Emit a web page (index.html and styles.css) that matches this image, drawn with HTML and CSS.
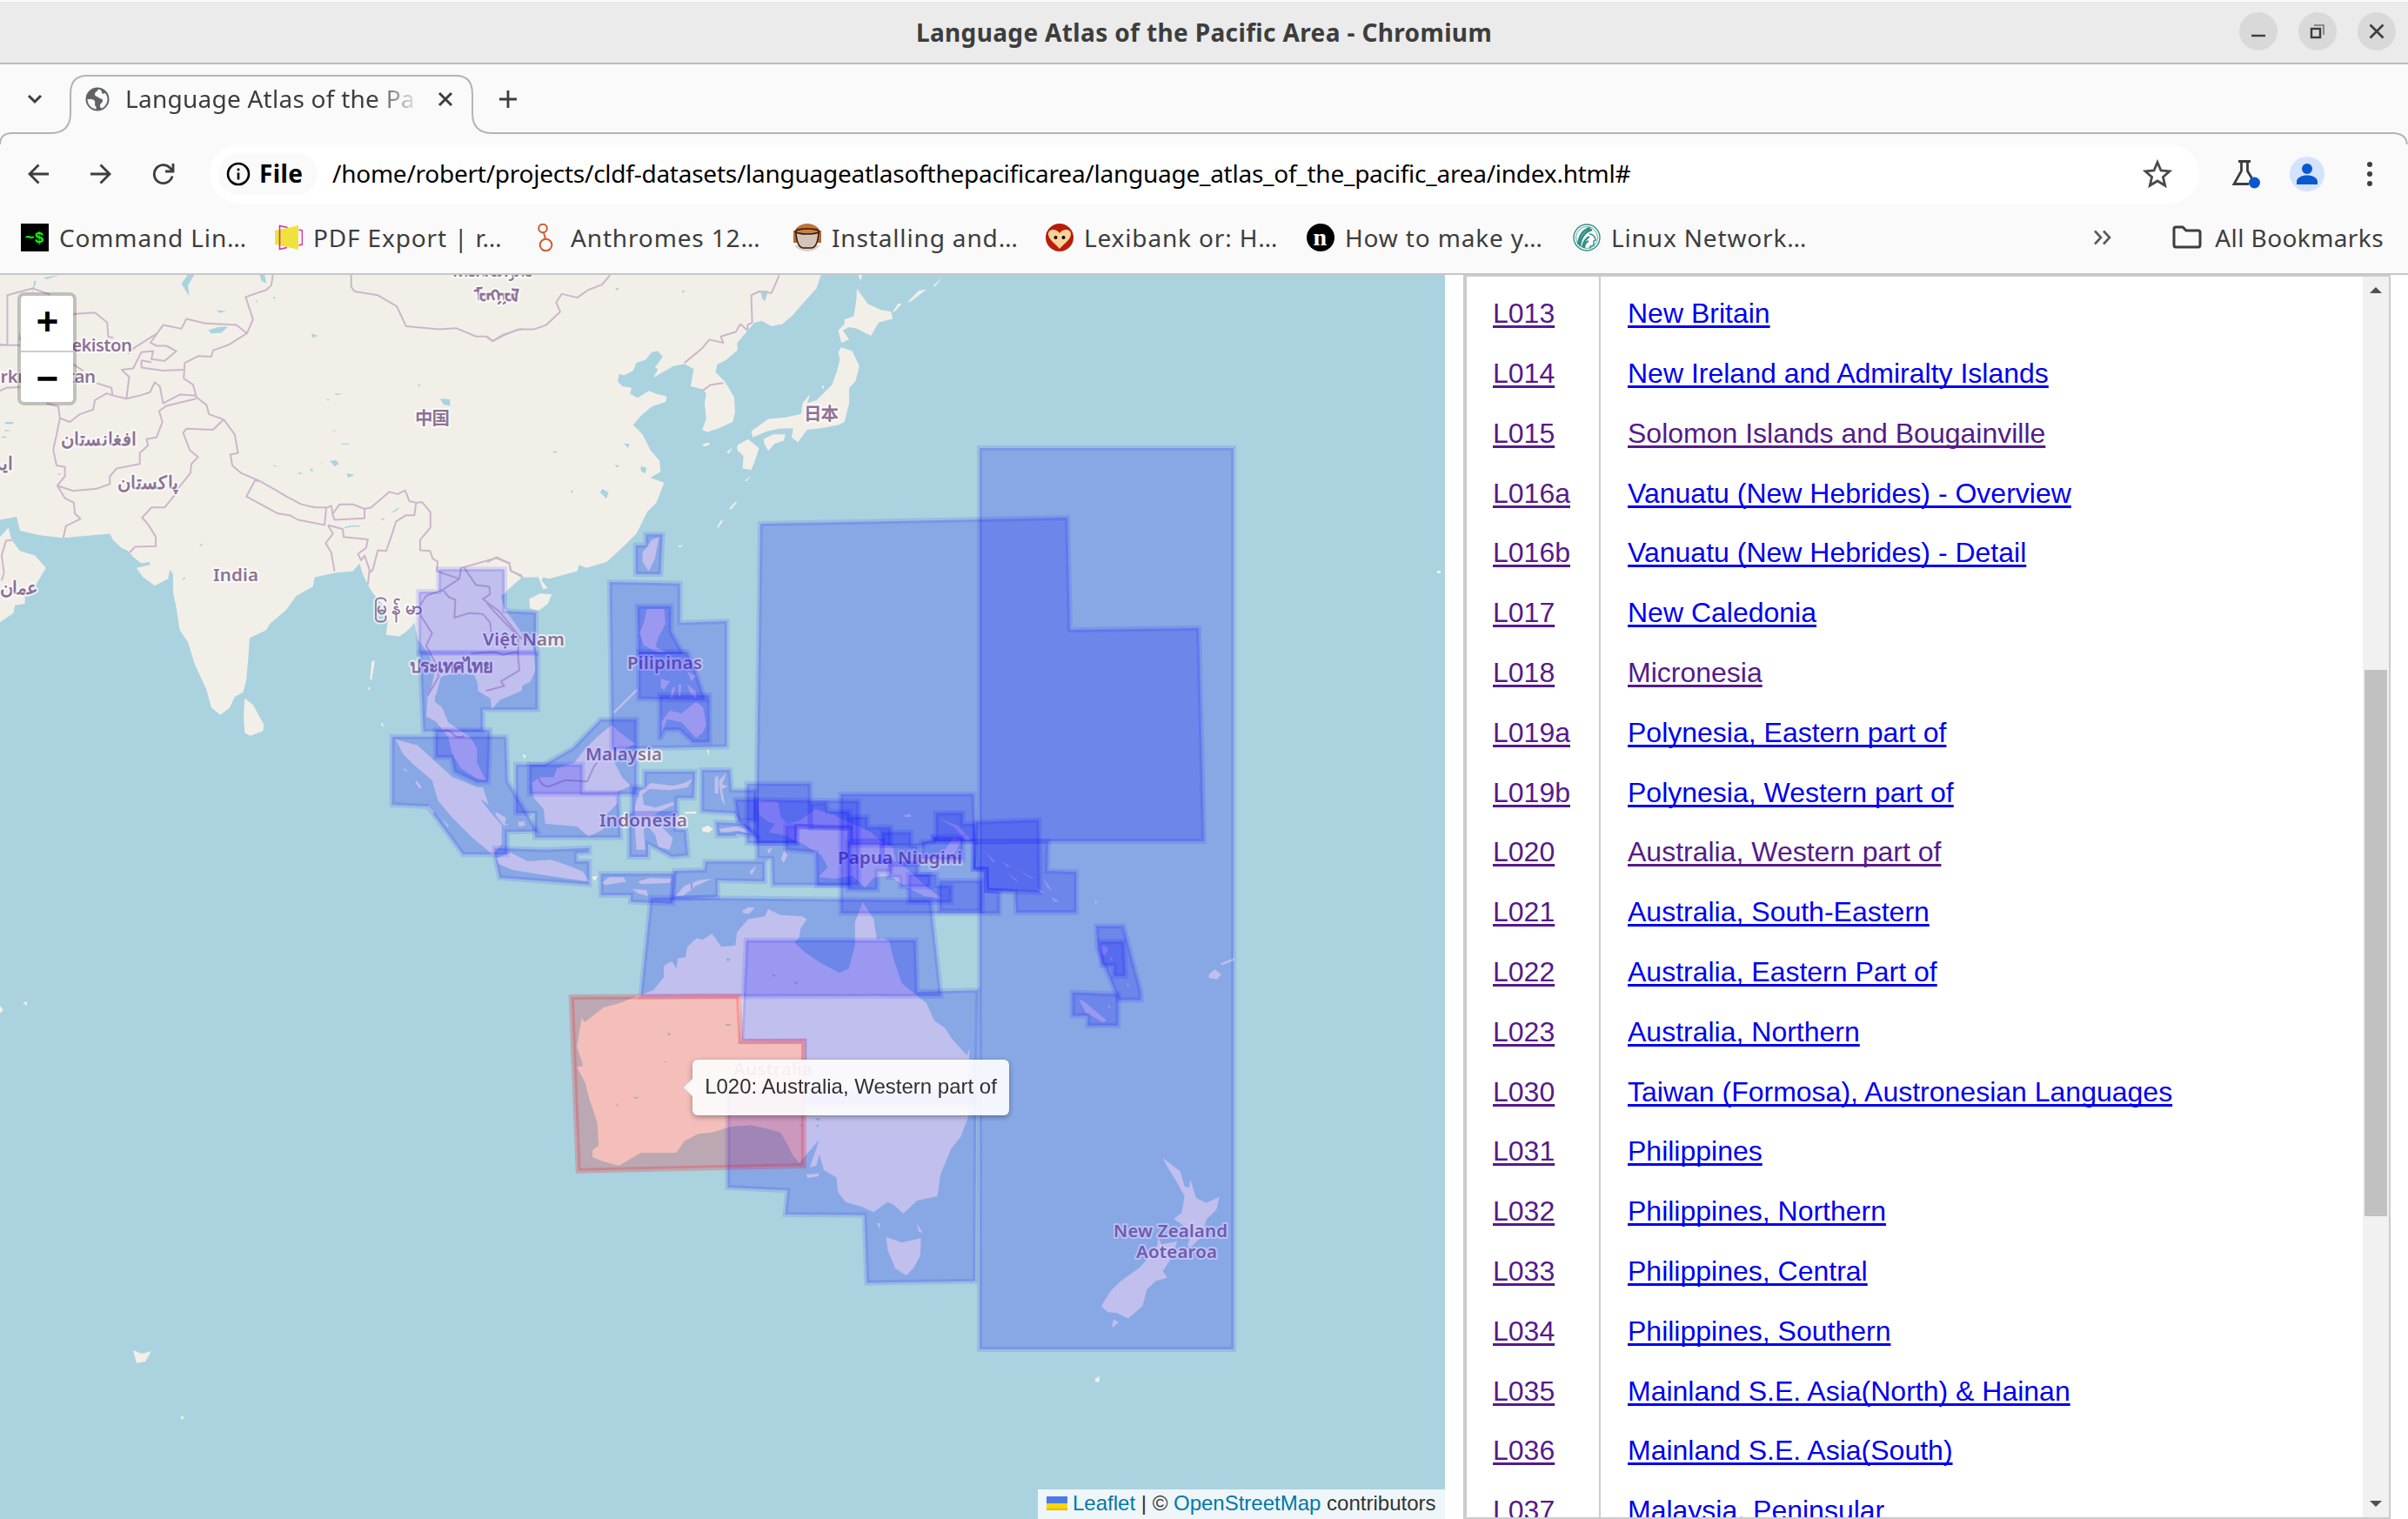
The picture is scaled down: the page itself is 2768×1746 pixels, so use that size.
FILE: index.html
```html
<!DOCTYPE html>
<html lang="en">
<head>
<meta charset="utf-8">
<title>Language Atlas of the Pacific Area</title>
<link rel="stylesheet" href="styles.css">
</head>
<body>
<header class="titlebar">
  <h1 class="window-title">Language Atlas of the Pacific Area - Chromium</h1>
  <div class="window-buttons">
    <span class="wbtn"><svg viewBox="0 0 44 44"><path d="M14 27h16" stroke="#3d3d3d" stroke-width="2.4"/></svg></span>
    <span class="wbtn"><svg viewBox="0 0 44 44" fill="none" stroke-width="2"><path d="M18 15h11v11" stroke="#8a8a8a"/><rect x="15" y="19" width="10" height="10" stroke="#3d3d3d" stroke-width="2.4"/></svg></span>
    <span class="wbtn"><svg viewBox="0 0 44 44"><path d="M14.500 14.500l15 15m0-15l-15 15" stroke="#3d3d3d" stroke-width="2.600"/></svg></span>
  </div>
</header>
<div class="tabstrip">
  <svg class="tab-outline" viewBox="0 0 2768 92" fill="none" stroke="#b4b4b4" stroke-width="2"><path d="M0 92Q0 79 14 79H58Q81 79 81 56V34Q81 13 100 13H524Q543 13 543 34V56Q543 79 566 79H2750Q2767 79 2767 94"/></svg>
  <svg class="tab-search" viewBox="0 0 18 12" fill="none" stroke="#3d3d3d" stroke-width="3"><path d="M2 2l7 7 7-7"/></svg>
  <svg class="tab-globe" viewBox="0 0 28 28"><circle cx="14" cy="14" r="13.500" fill="#5f6368"/><path d="M2.500 14c3 0 6-.5 8 1.500 2 3-1 5 2 7v3C7 25 2.500 20 2.500 14zM15 2.500c-1 3-4 3-4 6s4 2 5 4 4 0 4 3-3 3-3 6 2 3 2 3c4-2 6.500-6 6.500-10.500 0-3-1-5-2.500-7-2 1-4 1-4-1s-1-3-4-3.500z" fill="#fafafa"/></svg>
  <span class="tab-title">Language Atlas of the Pa</span>
  <svg class="tab-close" viewBox="0 0 18 18"><path d="M2 2l14 14m0-14L2 16" stroke="#3d3d3d" stroke-width="3"/></svg>
  <svg class="tab-new" viewBox="0 0 22 22"><path d="M11 1v20M1 11h20" stroke="#3d3d3d" stroke-width="2.800"/></svg>
</div>
<div class="toolbar">
  <svg class="nav-icon" viewBox="0 0 24 24" fill="none" stroke="#3d3d3d" stroke-width="2.800"><path d="M24 12H2M12.500 1.500L2 12l10.500 10.500"/></svg>
  <svg class="nav-icon fwd" viewBox="0 0 24 24" fill="none" stroke="#3d3d3d" stroke-width="2.800"><path d="M0 12h22M11.500 1.500L22 12 11.500 22.500"/></svg>
  <svg class="nav-icon reload" viewBox="0 0 26 26" fill="none" stroke="#3d3d3d" stroke-width="2.800"><path d="M23 15.500A10.500 10.500 0 1 1 20.500 6L24 9.500M24 1v9h-9"/></svg>
  <div class="omnibox">
    <div class="chip"><svg class="info" viewBox="0 0 28 28"><circle cx="14" cy="14" r="12" fill="none" stroke="#000" stroke-width="2.600"/><path d="M14 12.500v8M14 7.500v2.800" stroke="#000" stroke-width="2.600"/></svg><b class="file">File</b></div>
    <span class="url">/home/robert/projects/cldf-datasets/languageatlasofthepacificarea/language_atlas_of_the_pacific_area/index.html#</span>
    <svg class="star" viewBox="0 0 34 34"><path d="M17 3.500l4 9.500 10 .8-7.600 6.600 2.300 9.900L17 25l-8.700 5.300 2.300-9.900L3 13.800 13 13z" fill="none" stroke="#4a4a4a" stroke-width="2.800"/></svg>
  </div>
  <svg class="flask" viewBox="0 0 36 36"><path d="M10 3.500h14M13.500 4v10.500L5 29.500h17M20.500 4v10.500l6 10" fill="none" stroke="#3d3d3d" stroke-width="2.800"/><circle cx="28.500" cy="28" r="6.500" fill="#0b57d0"/></svg>
  <svg class="avatar" viewBox="0 0 40 40"><circle cx="20" cy="20" r="20" fill="#d3e3fd"/><circle cx="20" cy="14" r="6" fill="#0b57d0"/><path d="M8 32v-3c0-10 24-10 24 0v3z" fill="#0b57d0"/></svg>
  <svg class="kebab" viewBox="0 0 8 30" fill="#3d3d3d"><circle cx="4" cy="4" r="3"/><circle cx="4" cy="15" r="3"/><circle cx="4" cy="26" r="3"/></svg>
</div>
<nav class="bookmarks">
  <a class="bm bm-a"><svg viewBox="0 0 32 32"><path d="M0 0h32v32H0z"/><text x="5" y="22" class="term">~$</text></svg><span>Command Lin…</span></a>
  <a class="bm bm-b"><svg viewBox="0 0 32 32"><path d="M0 8l5-1v18l-5-1zM6 7l21-5v28L6 25z" fill="#f1e13c"/><path d="M14 27.500L5.500 29.500V2.500l9 2M27.500 7l4 1v16l-4 1" fill="none" stroke="#d1379a" stroke-width="1.600"/></svg><span>PDF Export | r…</span></a>
  <a class="bm bm-c"><svg viewBox="0 0 32 32" fill="none" stroke="#cf5b2e" stroke-width="2"><circle cx="12" cy="5.500" r="4.800"/><circle cx="15.500" cy="24.500" r="6.800"/><path d="M13 10.500l2 7"/></svg><span>Anthromes 12…</span></a>
  <a class="bm bm-d"><svg viewBox="0 0 32 32"><ellipse cx="16" cy="12" rx="15" ry="12" fill="#c0743a"/><path d="M0 8h32v14H0z" fill="#b06a3a"/><path d="M1 25l30 0q-6 7-15 7T1 25z" fill="#d9cfcb"/><path d="M3 10h26q-1 17-8 18H11Q4 27 3 10z" fill="#d3c3bb" stroke="#3a1b10" stroke-width="1.600"/><ellipse cx="16" cy="9" rx="13.500" ry="3" fill="#c98245" stroke="#3a1b10" stroke-width="1.600"/></svg><span>Installing and…</span></a>
  <a class="bm bm-e"><svg viewBox="0 0 32 32"><circle cx="16" cy="16" r="16" fill="#b81d0c"/><path d="M16 29C10 22 3 18 3 12c0-6 9-7 13-1 4-6 13-5 13 1 0 6-7 10-13 17z" fill="#fdd199"/><circle cx="11.500" cy="16" r="2"/><circle cx="20.500" cy="16" r="2"/></svg><span>Lexibank or: H…</span></a>
  <a class="bm bm-f"><svg viewBox="0 0 32 32"><circle cx="16" cy="16" r="16"/><text x="7.500" y="25" class="enn">n</text></svg><span>How to make y…</span></a>
  <a class="bm bm-g"><svg viewBox="0 0 32 32" fill="none" stroke="#2f8f85"><circle cx="16" cy="16" r="15" fill="#fff" stroke-width="1.400"/><circle cx="16" cy="16" r="12.500" stroke-width=".8"/><path d="M6 24Q8 8 20 5M8 26Q10 10 22 7M11 27q2-9 8-12M13 28q0-6 5-8" stroke-width="2.400"/><path d="M19 12q6 0 7 7l-2 1 0 5-4 1v3" stroke-width="1.400"/></svg><span>Linux Network…</span></a>
  <svg class="chevrons" viewBox="0 0 22 18" fill="none" stroke="#5a5a5a" stroke-width="2.600"><path d="M2 1.500L9 9l-7 7.500M12 1.500L19 9l-7 7.500"/></svg>
  <a class="bm bm-all"><svg viewBox="0 0 34 28" fill="none" stroke="#3d3d3d" stroke-width="3"><path d="M2 4q0-2 2-2h8l4 4h14q2 0 2 2v14q0 3-2 3H4q-2 0-2-3z"/></svg><span>All Bookmarks</span></a>
</nav>
<main class="page">
  <section class="map">
    <svg class="tiles" viewBox="0 316 1661 1430">
      <g class="land">
        <g transform="translate(0 310) scale(.38265 .35714)">
          <path d="M0 0H1568V990L1505 1050 1515 1090 1568 1170V1355L1490 1390 1478 1415 1475 1370 1440 1345 1425 1305 1390 1300 1365 1300 1325 1310 1310 1370 1290 1370 1305 1300 1290 1240 1255 1190 1245 1135 1235 1150 1220 1165 1200 1180 1160 1175 1165 1130 1150 1080 1120 1040 1105 1015 1090 980 1080 945 1060 970 1010 975 945 990 940 1020 890 1050 860 1095 810 1140 800 1160 750 1185 745 1260 740 1320 730 1360 705 1375 690 1410 662 1433 635 1410 620 1350 585 1270 565 1200 540 1160 530 1090 520 1040 520 980 510 965 505 995 465 1017 430 990 410 960 450 950 450 940 425 945 400 925 385 905 365 895 340 870 330 850 190 863 120 855 60 840 50 795 0 805z"/>
          <path d="M0 860L25 830 35 870 60 905 105 920 138 960 110 1010 75 1045 75 1075 45 1080 40 1105 0 1135zM735 1380L760 1400 793 1465 790 1485 752 1500 735 1490 732 1440zM1122 1255l4 5-10 60-4-5zM1104 1345l8 0-2 10zM1143 1460l8 0 0 14z"/>
        </g>
        <g transform="translate(560 310) scale(.35714)">
          <path d="M-30 0H1080L1060 60 1015 110 985 145 950 175 915 182 885 165 860 170 835 200 805 235 805 260 770 290 740 305 735 330 765 360 795 410 798 460 790 490 745 510 708 523 692 515 705 480 700 430 705 400 695 385 655 375 665 320 635 303 600 310 565 330 535 348 550 320 540 315 565 280 550 262 530 265 510 290 480 300 470 325 440 340 425 335 420 360 435 375 465 380 460 400 485 412 520 390 545 400 578 408 575 425 530 440 495 470 470 500 500 530 525 580 555 615 558 650 525 670 570 685 560 710 545 750 515 780 490 830 480 850 440 890 385 940 320 960 295 950 290 970 200 995 180 990 175 1000 195 1025 180 1028 165 990 110 990 75 1015 60 1040 40 1050 50 1090 95 1160 150 1220 155 1290 140 1325 75 1360 45 1380 15 1415 10 1380-30 1355z"/>
          <path d="M135 1060L170 1042 208 1045 195 1075 165 1098 138 1090zM553 860L540 930 520 970 500 940 500 910 530 870zM1190 60L1225 110 1270 130 1300 135 1305 158 1260 170 1235 213 1190 190 1165 185 1145 195 1165 225 1140 235 1130 195 1150 175 1150 160 1180 150 1188 100zM1140 250L1175 262 1198 310 1185 360 1165 380 1165 430 1150 490 1130 500 1075 510 1030 515 1000 555 980 540 985 510 940 512 900 520 855 540 850 520 905 480 960 475 1010 465 1015 430 1040 400 1030 430 1060 420 1110 370 1125 330 1135 290 1130 265zM890 545L920 530 960 530 955 550 925 560 905 583 892 560zM805 565L840 545 875 575 860 620 850 645 822 640 825 600 805 580zM1192 10h16l-6 28zM693 562l22-6 0 8-18 5zM740 828l12-20 8 0-16 22zM780 768l20-22 4 4-20 22zM1435 52l30-26-24 28zM1355 102l35-35 25-4-55 42zM1305 135l18-26 12 0-24 26zM1076 376l8-4-2 14zM770 588l20-16-12 20zM612 890l20-4-12 8zM830 678l18-14-14 18z"/>
        </g>
        <g transform="translate(420 600) scale(.33333)">
          <path d="M215 600L240 570 240 620 265 640 285 690 320 715 360 740 385 780 385 830 415 890 385 885 330 850 300 800 285 740 245 690 210 670zM105 750L180 770 240 825 300 880 350 900 400 920 400 960 430 1000 470 1045 470 1110 440 1150 420 1130 370 1090 300 1020 250 960 230 890 170 840 130 800zM575 900L600 880 650 880 660 850 720 830 760 780 800 740 850 700 870 720 930 765 880 790 860 830 885 880 915 910 870 930 870 970 830 1010 820 1060 770 1085 730 1050 670 1045 620 1040 615 990 580 950zM1130 885L1110 915 1050 925 980 920 955 940 960 975 1000 985 1060 965 1065 975 1010 1000 990 1020 1030 1060 1060 1090 1050 1130 1010 1120 1000 1080 975 1050 960 1060 965 1130 935 1130 930 1060 930 980 945 930 985 900 1060 910 1100 900z"/>
          <path d="M450 1160L500 1140 560 1170 640 1165 700 1185 750 1205 772 1240 700 1230 600 1215 510 1200 460 1180zM1070 1290L1100 1255 1150 1235 1195 1230 1140 1255 1095 1290zM920 1265L970 1270 975 1290 940 1280zM940 1240L980 1228 1055 1230 1050 1245 950 1248zM815 1245L840 1225 890 1225 900 1240 830 1252zM780 1225l20-5-8 18zM970 300L1030 300 1035 350 1010 400 1000 430 1040 450 1010 450 960 425 945 380 960 350zM1020 690L1050 650 1090 660 1140 620 1165 640 1175 700 1165 725 1140 745 1090 690 1040 680 1022 735zM855 655l80-80 4 6-80 80zM1020 540l30 10-20 30-12-10zM1060 570l8 0-8 40-10-6zM1080 560l10 0-4 40-6 0zM1110 515l30 15-16 20zM1110 560l30 25 0 25-20-20zM1205 880l12-4 0 60-12 0zM1220 890l25-25-15 40 20 5-20 12 10 55-12-20-8-50zM1218 1058l60-8 40 12 20 18-50-14-60 4zM1160 1055l22-8 16 12-14 12-20-4zM1100 1000l40-2 0 8-40 0zM175 890l20 25-8 4-14-20zM218 975l20 25-6 6-16-24zM125 845l20 12-4 4zM450 1000l35 20-4 20 16 4-20 2-28-36zM525 1035l22-4 4 16-20 4zM345 915l80 60-20-60zM542 800l12 6-6 12zM22 480l8 4-8 60-6 0zM262 1020l25 28-4 4zM1325 1205l24-20-16 32z"/>
        </g>
        <g transform="translate(780 800) scale(.35714 .33333)">
          <path d="M255 360L320 365 330 420 350 440 390 430 440 390 500 410 560 440 620 470 650 500 690 520 700 570 740 600 800 660 850 700 790 690 720 650 680 620 630 625 600 660 560 620 500 630 450 625 480 590 460 550 400 510 340 480 290 470 310 440 290 435 260 410zM790 560L850 540 885 490 910 500 890 540 820 575zM835 420L900 448 940 495 925 498 890 455zM725 412l20-6 4 10-20 2zM985 535l36 36-10 2zM1040 568l30 22-12 2zM1085 595l60 34-10 0zM1060 610l35 30-14-4zM1145 660l30 14-4 8zM1175 630l28 42-16-12zM1200 692l26 18-18 0zM340 530l10 20-12 26-8-14zM1338 708l10 2-6 6zM92 185l6 0 0 24zM285 530l18-8-12 22zM1360 860l20 10-6 26-12-10z"/>
        </g>
        <g transform="translate(640 1000) scale(.35714 .33333)">
          <path d="M80 510L90 525 150 475 200 460 260 435 310 415 345 370 345 330 370 315 385 340 390 305 415 300 420 265 450 235 470 240 500 220 530 265 575 260 580 215 615 170 670 160 680 135 720 155 790 160 805 170 785 200 780 235 765 250 800 285 850 320 910 355 940 340 960 260 960 180 985 110 1020 170 1030 240 1050 235 1070 245 1085 310 1110 390 1150 425 1190 460 1215 520 1250 545 1270 580 1320 640 1328 615 1325 720 1325 850 1300 920 1270 960 1235 1050 1225 1125 1160 1140 1115 1185 1085 1155 1065 1145 1020 1180 980 1160 930 1145 905 1110 900 1060 860 1035 845 980 835 1020 815 1025 845 930 780 1010 760 985 745 950 720 905 670 890 625 880 560 885 500 905 455 910 410 935 385 975 270 975 200 1020 150 1005 115 990 115 965 135 950 130 870 105 790 90 730 65 680 85 675 65 610zM1060 1265L1110 1285 1172 1270 1170 1330 1150 1370 1125 1398 1090 1375 1065 1310zM1030 1218l10 0 0 22zM1160 1222l18 30-14-6zM803 1050l40-4 0 10-36 6zM597 140l20-12 20 2-16 20-20 0z"/>
        </g>
        <g transform="translate(1080 1000) scale(.33333 .38265)">
          <path d="M770 866L830 905 845 950 860 955 865 930 885 985 920 1000 965 982 955 1020 920 1050 905 1100 870 1130 855 1130 870 1085 808 1048 835 1030 845 980 820 940 785 890zM755 1105L765 1125 820 1115 800 1165 770 1205 785 1225 745 1235 715 1260 700 1310 650 1347 610 1330 580 1328 558 1310 590 1265 625 1235 690 1195 720 1165 750 1130zM600 1350l18 8-24 18zM930 312l20-14 22 16-16 14-28-4zM970 280l46-16 0 8-44 14zM480 388l20 8 76 56-12 6-60-30zM560 225l20 8 0 14-16-8zM584 255l16 16-10 0zM580 410l8-4 2 12zM535 1530l16-10 0 18-12 0zM645 340l8 4-4 8z"/>
        </g>
        <path d="M153 1552l10 4 11-3-7 12-10 2zM208 1628h3v3h-3zM1652 656h4v3h-4zM0 1156l4 5-4 4zM26 1153l5-2v5z"/>
      </g>
      <g transform="translate(0 310) scale(.38265 .35714)" class="lakes">
        <path d="M545 45L565 15H585L565 50 568 85zM780 15h15l5 30-15-10zM625 195l30-10 30-2-20 20-30 2zM1322 415l30 2 0 22-20-6zM650 130l30 4-20 5zM990 615l20-2 8 12-12 8zM1040 655l25 5-18 10zM935 205l20 8-15 6zM1005 398l25 2-20 4zM95 80l8-45 6 4zM130 25l50-8-40 14zM15 490h25v6H15zM15 515l20 2-20 4zM5 537h14v4H5zM895 652l18 4-14 2zM820 628l14 6-10 0zM930 640l8 12 2-10zM955 618l20 6-10-2zM998 515l12 4-6 2zM1025 560h24v3h-24zM768 98l8 4-6 4zM820 86l10 4-8 4zM58 200l6 30-8-5zM1255 368l10 4-8 4zM980 418l10-2-4 6zM170 655l14 2-6 4z"/>
        <path d="M1145 805l10-4M1180 780l18-12M1035 830q30-8 45-4M550 998l6-8M600 890l8-8" fill="none" stroke="#aad3df" stroke-width="4"/>
      </g>
      <g transform="translate(560 310) scale(.35714)" class="lakes"><path d="M880 68l24 0-10 34-10-10zM370 705l20 12-6 20-20-20zM495 632l18 6-4 18-14-8zM440 560l18 0-4 14zM410 628l16 2-8 6zM412 58l14 2-8 8zM625 65l12 4-6 6zM208 583l20 2-10 6zM268 712l8-2-2 10z"/></g>
      <g transform="translate(640 1000) scale(.35714 .33333)" class="lakes"><path d="M540 530l25 2-15 7zM355 562l14 2-8 8zM245 782l22 2-12 6zM830 856l18 2-6 8zM833 880h12l-6 8zM762 385l14 4-6 8zM693 360l14 4-10 4zM545 305l14 0-8 12zM776 880h14v6zM340 661h12v4zM190 805l8 4-4 8z"/></g>
      <g class="borders">
        <g transform="translate(0 310) scale(.38265 .35714)">
          <path d="M820 15L815 50 800 65 738 88 760 160 742 205 690 240 640 260 635 280 595 278 555 300 552 350 580 370 590 410 620 435 628 465 672 482 705 530 715 590 692 595 698 630 725 655 780 680 830 710 860 730 905 755 945 765 985 765 995 760 1000 790 1005 805 1095 800 1095 770 1060 755 1020 755 1000 785M742 205L710 178 615 172 560 158 545 190 490 178 472 205 405 250 385 270M472 205L452 235 470 245 500 245 530 262 495 293 455 288 460 262 425 265 400 318 365 322 388 345 380 415 340 405 320 398 285 420 280 450 240 465 210 490 180 478 175 440 140 430M425 292L425 315 490 325 550 322M425 292L455 298M380 415L420 405 450 395 465 362 480 375 490 430 540 402 590 405M590 415L500 438 478 455 488 490 470 540 440 545 445 565 420 590 420 625 350 640 330 665 330 690 290 705 220 712 172 695 195 665 195 635 170 630 160 580 170 530 180 478M672 482L640 515 560 512 550 525 570 580 595 603 575 625 572 655 530 710 525 725 495 765 455 765 427 798 445 820 468 860 468 890 405 892 390 910M172 695L195 735 222 750 225 785 242 802 198 825 190 863M780 680L765 680 740 730 835 785 870 790 895 805 975 822 980 765M985 822L1000 850 978 880 995 910 1005 970M985 822L1030 835 1032 860 1105 868 1100 895 1075 915 1085 935 1095 920 1110 965 1105 1015M1095 770L1115 765 1170 715 1195 722 1217 710 1230 745 1250 750 1245 790 1220 790 1190 810 1175 860 1160 905 1135 903 1120 965 1112 975M1250 750L1268 748 1293 780 1293 830 1262 870 1262 903 1292 905 1300 930 1315 940 1312 970 1380 995 1385 960 1435 945 1490 928 1530 945 1535 970 1568 985M1395 960L1430 1015 1470 1020 1472 1045 1450 1060 1500 1100 1568 1190M1380 995L1330 1030 1280 1050 1262 1080 1265 1115 1298 1170 1280 1210 1310 1270 1318 1310 1285 1370M1330 1030L1350 1055 1368 1062 1365 1120 1410 1105 1450 1108 1472 1135 1478 1190M1415 1235L1490 1230 1510 1240 1555 1230 1560 1290 1505 1325 1515 1340 1460 1355"/>
          <path d="M1055 15L1055 55 1065 70 1135 82 1192 118 1220 182 1320 192 1370 188 1430 215 1460 215 1480 230 1510 210 1568 190M0 240L22 243 22 82 98 60 150 80M0 243H60M220 143L285 138 322 170 325 215 340 220M220 305L250 325M290 365L335 380 338 405M0 390L20 380 60 378M35 870L18 872 5 920 12 975 5 1000M1330 1485Q1350 1475 1365 1500 1380 1510 1395 1500"/>
        </g>
        <g transform="translate(560 310) scale(.35714)"><path d="M395 18L370 48 325 65 290 90 240 78 222 105 235 135 190 178 150 192 100 192 55 210 18 230 0 215M940 18L915 75 875 70 850 82 853 170 838 178 838 195 815 175 800 200 752 215 760 235 715 225 690 255 635 300M695 388L720 370 760 365M0 942L30 925 72 945 75 968 115 990M0 1075Q40 1120 100 1180V1240"/></g>
        <g transform="translate(420 600) scale(.33333)"><path d="M597 880Q605 910 630 913L690 890 765 895 790 840 800 830M1125 1245v20"/></g>
      </g>
      <g class="labels">
        <text x="42" y="404" textLength="110">Oʻzbekiston</text>
        <text x="-22" y="440" textLength="132">Türkmenistan</text>
        <text x="70" y="512" textLength="87">افغانستان</text>
        <text x="135" y="562" textLength="70">پاکستان</text>
        <text x="-30" y="540">ایران</text>
        <text x="0" y="683" textLength="44">عمان</text>
        <text x="245" y="668" textLength="52">India</text>
        <text x="477" y="488" textLength="40">中国</text>
        <text x="924" y="483" textLength="40">日本</text>
        <text x="520" y="318" textLength="92">Монгол улс</text>
        <text x="545" y="347" textLength="52">ᠮᠣᠩᠭᠣᠯ</text>
        <text x="430" y="706" textLength="55">မြန်မာ</text>
        <text x="555" y="742" textLength="94">Việt Nam</text>
        <text x="471" y="773" textLength="96">ประเทศไทย</text>
        <text x="721" y="769" textLength="86">Pilipinas</text>
        <text x="673" y="874" textLength="88">Malaysia</text>
        <text x="689" y="950" textLength="101">Indonesia</text>
        <text x="963" y="993" textLength="143">Papua Niugini</text>
        <text x="843" y="1236" textLength="91">Australia</text>
        <text x="1280" y="1422" textLength="131">New Zealand</text>
        <text x="1306" y="1446" textLength="93">Aotearoa</text>
      </g>
      <g class="areas">
        <path d="M1126 515H1418V1551H1126z"/>
        <path d="M874 602L1227 595 1230 724 1378 722 1384 967H1073L1060 972H1014V967H977V952L916 950V969H869z"/>
        <g transform="translate(420 600) scale(.33333)">
          <path d="M253 163H480V307L588 312V452H184V240H253z"/><path d="M188 450H594V647H405V722H200z"/>
          <path d="M242 717H430L424 898H385L308 862 297 812H242z"/><path d="M92 740H485L491 895 593 1067 489 1069V1147H337L215 981 92 975z"/>
          <path d="M565 836H617L715 780 812 680H935V938H565z"/><path d="M519 836H748V934H872L880 1088H585V1004H519z"/>
          <path d="M962 860H1137L1133 952H1075V1006H920V914H962z"/><path d="M910 1006H1070V1060L1105 1062 1113 1150 1057 1155 975 1110V1155H910z"/>
          <path d="M1160 855H1257L1263 925H1347V1030H1290L1275 1005 1160 998z"/><path d="M1210 1035L1310 1040 1347 1082 1277 1075V1082H1214z"/><path d="M1275 957H1347V1080L1285 1030z"/>
          <path d="M446 1124L620 1130 772 1124V1140L728 1142V1170H772V1250L463 1227 446 1150z"/>
          <path d="M812 1213H1065L1060 1316 915 1310V1287H812z"/><path d="M1065 1203L1170 1200 1172 1171H1377V1240L1215 1236V1292L1057 1300z"/>
          <path d="M842 207L1085 212V347L1247 342V775L850 782z"/><path d="M938 290H1054V378L1097 456H942z"/><path d="M942 447H1110L1135 505 1172 615 942 610z"/>
          <path d="M1015 597H1187V760H1130L1083 717H1033L1015 750z"/><path d="M967 43H1025L1018 180H932V80H967z"/>
        </g>
        <g transform="translate(780 800) scale(.35714 .33333)">
          <path d="M220 302H424V450H380V508H220z"/><path d="M250 358L580 362V652H303L300 560H253z"/><path d="M345 448L552 455V655H445L443 540 345 530z"/>
          <path d="M424 372L475 368 480 398H550V455H424z"/>
          <path d="M522 338H950L957 595 990 598V670L1033 675V750H522z"/><path d="M553 417H608V452H683V515H553z"/>
          <path d="M545 502H655V570H683V605H640V668H545z"/><path d="M655 470H748V515L770 520V580H683V570H655z"/>
          <path d="M828 403H915V440H955V503H820V485H828z"/><path d="M783 502H820V485H915V565L783 562z"/>
          <path d="M683 580H770V615H810V658H715L710 625H675z"/><path d="M740 615H830V655H878V712H740z"/><path d="M840 637H977V742H840z"/>
          <path d="M957 435L1160 427 1163 678 992 670 990 598H948z"/><path d="M948 503L1190 500 1187 603 1280 607V747H1087L1083 675 992 670 990 598H948z"/>
        </g>
        <g transform="translate(1080 1000) scale(.33333 .38265)">
          <path d="M540 168H634L694 365V391H618L545 238z"/><path d="M553 215H635L641 318H602V287H558z"/><path d="M458 367L616 373V468H511V438H458z"/>
        </g>
        <g transform="translate(640 1000) scale(.35714 .33333)">
          <path d="M303 95L1203 104 1237 435 270 437z"/><path d="M610 242H1155L1160 420 1355 415 1350 808H797V590H595z"/>
          <path d="M550 760L1350 770 1347 1418 998 1424 990 1190 735 1188 743 1105 550 1095z"/>
          <path class="active" d="M47 438L585 435 592 592 795 590V1020L69 1037z"/>
        </g>
      </g>
    </svg>
    <div class="zoomctl"><a>+</a><a>−</a></div>
    <div class="tooltip">L020: Australia, Western part of</div>
    <div class="attribution"><i class="flag"></i><a>Leaflet</a> | © <a>OpenStreetMap</a> contributors</div>
  </section>
  <section class="panel">
    <div class="rows">
      <div class="row"><a class="v">L013</a><a>New Britain</a></div>
      <div class="row"><a class="v">L014</a><a>New Ireland and Admiralty Islands</a></div>
      <div class="row"><a class="v">L015</a><a class="v">Solomon Islands and Bougainville</a></div>
      <div class="row"><a class="v">L016a</a><a>Vanuatu (New Hebrides) - Overview</a></div>
      <div class="row"><a class="v">L016b</a><a>Vanuatu (New Hebrides) - Detail</a></div>
      <div class="row"><a class="v">L017</a><a>New Caledonia</a></div>
      <div class="row"><a class="v">L018</a><a class="v">Micronesia</a></div>
      <div class="row"><a class="v">L019a</a><a>Polynesia, Eastern part of</a></div>
      <div class="row"><a class="v">L019b</a><a>Polynesia, Western part of</a></div>
      <div class="row"><a class="v">L020</a><a class="v">Australia, Western part of</a></div>
      <div class="row"><a class="v">L021</a><a>Australia, South-Eastern</a></div>
      <div class="row"><a class="v">L022</a><a>Australia, Eastern Part of</a></div>
      <div class="row"><a class="v">L023</a><a>Australia, Northern</a></div>
      <div class="row"><a class="v">L030</a><a>Taiwan (Formosa), Austronesian Languages</a></div>
      <div class="row"><a class="v">L031</a><a>Philippines</a></div>
      <div class="row"><a class="v">L032</a><a>Philippines, Northern</a></div>
      <div class="row"><a class="v">L033</a><a>Philippines, Central</a></div>
      <div class="row"><a class="v">L034</a><a>Philippines, Southern</a></div>
      <div class="row"><a class="v">L035</a><a>Mainland S.E. Asia(North) &amp; Hainan</a></div>
      <div class="row"><a class="v">L036</a><a>Mainland S.E. Asia(South)</a></div>
      <div class="row"><a class="v">L037</a><a>Malaysia, Peninsular</a></div>
    </div>
    <div class="scrollbar"><i class="up"></i><i class="thumb"></i><i class="down"></i></div>
  </section>
</main>
</body>
</html>
```
FILE: styles.css
```css
* { box-sizing: border-box; }
body { margin: 0; width: 2768px; height: 1746px; overflow: hidden; background: #fff; font-family: "Noto Sans", "Open Sans", sans-serif; color: #3d3d3d; display: flex; flex-direction: column; }
svg { display: block; flex: none; }
.titlebar { height: 74px; flex: none; background: #ebebeb; border-top: 2px solid #fafafa; border-bottom: 2px solid #bbb; position: relative; display: flex; align-items: center; justify-content: center; }
.window-title { margin: 0; font-size: 28px; font-weight: 700; letter-spacing: .36px; line-height: 40px; white-space: nowrap; }
.window-buttons { position: absolute; right: 14px; top: 12px; display: flex; gap: 24px; }
.wbtn { width: 44px; height: 44px; border-radius: 50%; background: #d9d9d9; }
.tabstrip { height: 80px; flex: none; background: #fafafa; position: relative; display: flex; align-items: center; padding-left: 31px; }
.tab-outline { position: absolute; left: 0; top: 0; width: 2768px; height: 92px; z-index: 1; }
.tab-search { width: 18px; height: 12px; }
.tab-globe { width: 28px; height: 28px; margin-left: 49px; }
.tab-title { margin-left: 18px; width: 337px; padding-bottom: 2px; font-size: 28px; letter-spacing: .25px; line-height: 38px; white-space: nowrap; overflow: hidden; -webkit-mask-image: linear-gradient(90deg, #000 285px, transparent 340px); mask-image: linear-gradient(90deg, #000 285px, transparent 340px); }
.tab-close { width: 18px; height: 18px; margin-left: 22px; }
.tab-new { width: 22px; height: 22px; margin-left: 52px; }
.toolbar { height: 92px; flex: none; background: #fafafa; display: flex; align-items: center; padding-left: 32px; }
.nav-icon { width: 24px; height: 24px; }
.fwd { margin-left: 48px; }
.reload { width: 26px; height: 26px; margin-left: 47px; }
.omnibox { width: 2287px; height: 68px; margin-left: 40px; border-radius: 34px; background: #fff; display: flex; align-items: center; padding: 0 31px 0 10px; }
.chip { width: 114px; height: 48px; border-radius: 24px; background: #fafafa; display: flex; align-items: center; padding-left: 9px; color: #000; }
.info { width: 28px; height: 28px; margin-right: 10px; }
.file, .url { font-size: 28px; line-height: 38px; padding-bottom: 2px; white-space: nowrap; }
.file { letter-spacing: .4px; }
.url { margin-left: 17px; color: #000; flex: 1; letter-spacing: -.25px; }
.star { width: 34px; height: 34px; }
.flask { width: 36px; height: 36px; margin-left: 35px; }
.avatar { width: 40px; height: 40px; margin-left: 33px; }
.kebab { width: 8px; height: 30px; margin-left: 48px; }
.bookmarks { height: 70px; flex: none; background: #fafafa; border-bottom: 2px solid #c6c6c6; position: relative; display: flex; align-items: center; padding: 0 28px 14px 24px; }
.bm { display: flex; align-items: center; gap: 12px; height: 40px; font-size: 28px; letter-spacing: .85px; white-space: nowrap; flex: none; }
.bm svg { width: 32px; height: 32px; letter-spacing: 0; }
.bm-a { width: 292px; } .bm-b { width: 296px; } .bm-c { width: 300px; } .bm-d { width: 290px; } .bm-e { width: 300px; } .bm-f { width: 306px; } .bm-g { width: 290px; }
.term { font: 700 18px "Liberation Mono", monospace; fill: #0f0; }
.enn { font: 700 28px "Liberation Serif", serif; fill: #fff; }
.chevrons { width: 22px; height: 18px; margin-left: auto; }
.bm-all { margin-left: 69px; width: auto; gap: 15px; letter-spacing: .4px; }
.bm-all svg { width: 34px; height: 28px; }
.page { height: 1430px; display: flex; background: #fff; }
.map { width: 1661px; height: 1430px; background: #aad3df; position: relative; overflow: hidden; font-family: "Liberation Sans", Arial, sans-serif; }
.tiles { width: 1661px; height: 1430px; }
.land { fill: #f2efe9; }
.lakes { fill: #aad3df; }
.borders path { fill: none; stroke: #cdb6cb; stroke-width: 2; vector-effect: non-scaling-stroke; stroke-linejoin: round; }
.labels text { font: 600 20.500px "Noto Sans", "Noto Sans CJK SC", sans-serif; fill: #8f7296; stroke: #fff; stroke-opacity: .7; stroke-width: 4; stroke-linejoin: round; paint-order: stroke; }
.areas path { fill: #00f; fill-opacity: .2; stroke: #00f; stroke-opacity: .1; stroke-width: 6; vector-effect: non-scaling-stroke; }
.areas .active { fill: #f00; stroke: #f00; stroke-opacity: .2; }
.zoomctl { position: absolute; left: 20px; top: 20px; width: 68px; height: 130px; border: 4px solid rgba(0,0,0,.2); border-radius: 8px; background: #fff; background-clip: padding-box; display: flex; flex-direction: column; }
.zoomctl a { flex: 1; font: 700 44px/60px "Liberation Mono", monospace; padding: 3px 0 0 1px; text-align: center; color: #000; }
.zoomctl a + a { border-top: 2px solid #ccc; }
.tooltip { position: absolute; left: 796px; top: 902px; width: 364px; height: 64px; border-radius: 6px; background: #fff; opacity: .9; box-shadow: 0 2px 6px rgba(0,0,0,.4); font-size: 24px; line-height: 62px; text-align: center; color: #222; white-space: nowrap; }
.tooltip::before { content: ""; position: absolute; left: -10px; top: 22px; border: 10px solid transparent; border-left: 0; border-right-color: #fff; }
.attribution { position: absolute; right: 0; bottom: 0; width: 468px; height: 34px; padding-left: 10px; background: rgba(255,255,255,.8); font-size: 24px; line-height: 32px; color: #333; white-space: nowrap; }
.attribution a { color: #0078a8; }
.flag { display: inline-block; width: 24px; height: 16px; margin-right: 6px; background: linear-gradient(#4c7be1 50%, #ffd500 50% 88%, #e0bc00 88%); }
.panel { margin-left: 21px; width: 1066px; height: 1430px; border: 2px solid #ccc; border-left-width: 4px; display: flex; overflow: hidden; font-family: "Liberation Sans", Arial, sans-serif; font-size: 32px; }
.rows { width: 1030px; overflow: hidden; padding-top: 8.400px; background: linear-gradient(#ccc, #ccc) 152px 0 / 2px 100% no-repeat; }
.row { height: 68.800px; display: grid; grid-template-columns: 155px 1fr; align-items: center; padding-left: 30px; }
.row a { justify-self: start; color: #00e; text-decoration: underline; text-decoration-thickness: 3px; text-underline-offset: 3px; text-decoration-skip-ink: none; }
.row .v { color: #551a8b; }
.scrollbar { width: 30px; background: #f1f1f1; position: relative; }
.thumb { position: absolute; left: 2px; right: 2px; top: 452px; height: 628px; background: #c1c1c1; }
.up, .down { position: absolute; left: 8px; border: 7px solid transparent; }
.up { top: 12px; border-top: 0; border-bottom-color: #505050; }
.down { bottom: 12px; border-bottom: 0; border-top-color: #505050; }
```
